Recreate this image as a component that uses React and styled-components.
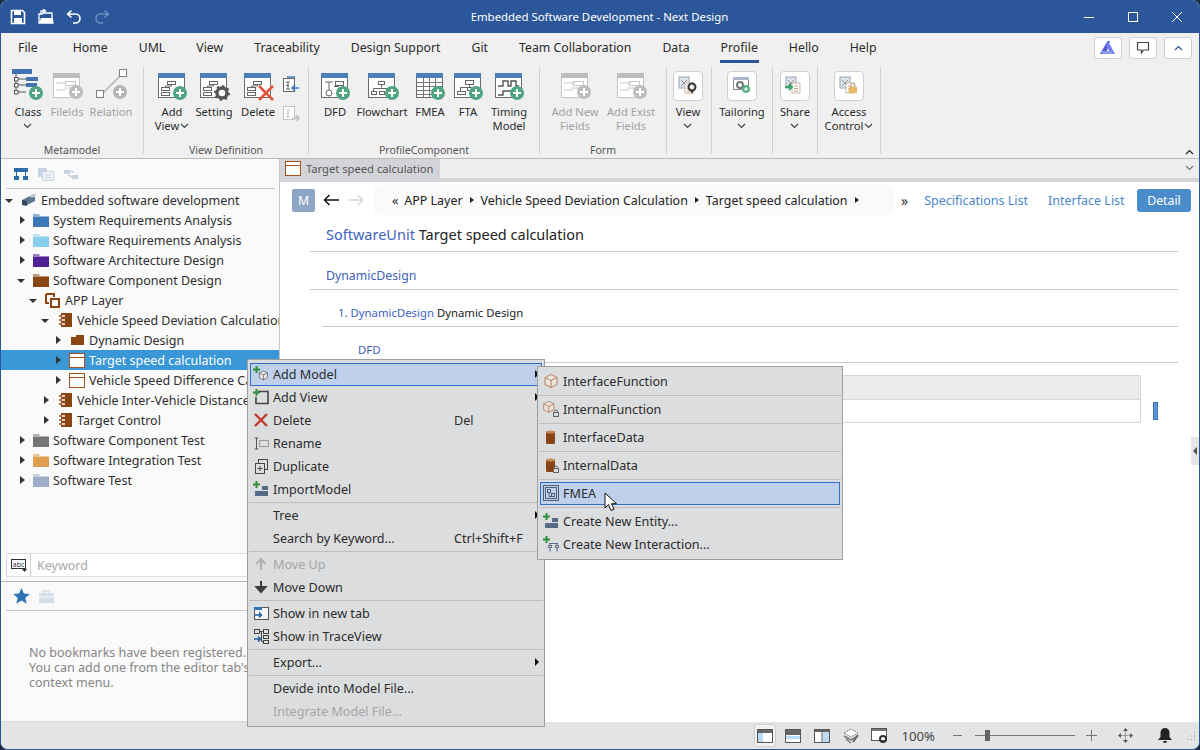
import React from "react";
import styled, { createGlobalStyle } from "styled-components";

const FONT = `"Noto Sans", "Open Sans", sans-serif`;

const GlobalStyle = createGlobalStyle`
  html, body {
    margin: 0;
    padding: 0;
    width: 1200px;
    height: 750px;
    overflow: hidden;
    background: #1d2a40;
    font-family: ${FONT};
  }
`;

const Window = styled.div`
  position: relative;
  box-sizing: border-box;
  width: 1200px;
  height: 750px;
  display: flex;
  flex-direction: column;
  overflow: hidden;
  background: #f0f0f0;
  border: 1px solid #2b579a;
  border-top: 0;
  border-radius: 8px;
  color: #222;
  font-size: 12.3px;
`;

/* title bar */
const TitleBar = styled.div`
  position: relative;
  height: 33px;
  flex: none;
  display: flex;
  align-items: center;
  background: #2b579a;
  color: #fff;
  padding-left: 3px;
`;

const QuickButton = styled.span`
  width: 28px;
  height: 20px;
  display: flex;
  align-items: center;
  justify-content: center;
`;

const WindowTitle = styled.div`
  flex: 1;
  text-align: center;
  padding-left: 16px;
  font-size: 11.4px;
`;

const WindowControl = styled.span`
  width: 44px;
  height: 20px;
  display: flex;
  align-items: center;
  justify-content: center;
`;

/* menu */
const MenuBar = styled.div`
  height: 30px;
  flex: none;
  display: flex;
  align-items: center;
  padding: 0 7px 0 17px;
  gap: 31px;
`;

const MenuTab = styled.span`
  position: relative;
  line-height: 30px;
  margin-left: ${(p) => p.$shift || 0}px;
  color: #2a2a2a;
  &::after {
    content: "";
    display: ${(p) => (p.$active ? "block" : "none")};
    position: absolute;
    left: -1px;
    right: -1px;
    bottom: 0;
    height: 3px;
    background: #2b579a;
  }
`;

const MenuTools = styled.div`
  margin-left: auto;
  display: flex;
  gap: 7px;
`;

const MenuTool = styled.span`
  box-sizing: border-box;
  width: 28px;
  height: 22px;
  display: flex;
  align-items: center;
  justify-content: center;
  background: #fff;
  border: 1px solid #cfcfcf;
  border-radius: 3px;
`;

/* ribbon */
const Ribbon = styled.div`
  position: relative;
  box-sizing: border-box;
  height: 96px;
  flex: none;
  display: flex;
  padding-top: 4px;
  border-bottom: 1px solid #b9b9b9;
`;

const Group = styled.div`
  box-sizing: border-box;
  width: ${(p) => p.$w}px;
  height: 87px;
  flex: none;
  display: flex;
  flex-direction: column;
  border-right: 1px solid #d2d2d2;
`;

const GroupItems = styled.div`
  flex: 1;
  display: flex;
  padding-left: ${(p) => p.$pad || 0}px;
`;

const GroupTitle = styled.div`
  height: 14px;
  line-height: 14px;
  margin-bottom: -3px;
  text-align: center;
  font-size: 10.5px;
  color: #555;
`;

const RibbonItem = styled.div`
  width: ${(p) => p.$w}px;
  flex: none;
  display: flex;
  flex-direction: column;
  align-items: center;
  padding-top: 1px;
  color: ${(p) => (p.$off ? "#a2a2a2" : "#2a2a2a")};
`;

const IconSlot = styled.div`
  height: 34px;
  display: flex;
  align-items: center;
  justify-content: center;
`;

const RibbonLabel = styled.div`
  margin-top: 3px;
  display: flex;
  flex-direction: column;
  align-items: center;
  line-height: 14px;
  font-size: 11.2px;
  white-space: nowrap;
`;

const LabelLine = styled.span`
  display: flex;
  align-items: center;
  gap: 1px;
  height: 14px;
`;

const SquareButton = styled.span`
  box-sizing: border-box;
  width: 30px;
  height: 30px;
  margin-top: 2px;
  display: flex;
  align-items: center;
  justify-content: center;
  background: #fff;
  border: 1px solid #cfcfcf;
  border-radius: 4px;
`;

const SmallColumn = styled.div`
  width: 22px;
  display: flex;
  flex-direction: column;
  align-items: center;
  gap: 10px;
  padding-top: 9px;
`;

const CollapseRibbon = styled.span`
  position: absolute;
  right: 5px;
  bottom: 3px;
  line-height: 0;
`;

/* body */
const Body = styled.div`
  flex: 1;
  min-height: 0;
  display: flex;
`;

const Sidebar = styled.aside`
  box-sizing: border-box;
  width: 279px;
  flex: none;
  display: flex;
  flex-direction: column;
  overflow: hidden;
  background: #fafafa;
  border-right: 1px solid #c4c4c4;
  border-bottom: 1px solid #d8d8d8;
  font-size: 12.5px;
`;

const PaneTools = styled.div`
  box-sizing: border-box;
  height: ${(p) => p.$h}px;
  flex: none;
  margin: 0 4px 0 5px;
  display: flex;
  align-items: center;
  gap: ${(p) => p.$gap || 9}px;
  padding-left: 7px;
  border-bottom: 1px solid #c8c8c8;
`;

const Tree = styled.div`
  height: 363px;
  flex: none;
  padding-top: 1px;
`;

const TreeRow = styled.div`
  height: 20px;
  display: flex;
  align-items: center;
  white-space: nowrap;
  padding-left: ${(p) => p.$depth * 12}px;
  background: ${(p) => (p.$selected ? "#3a97d8" : "transparent")};
  color: ${(p) => (p.$selected ? "#fff" : "#2f2f2f")};
`;

const Twist = styled.span`
  width: 15px;
  flex: none;
  display: flex;
  justify-content: center;
  &::before {
    content: "";
    display: ${(p) => (p.$state ? "block" : "none")};
    border-style: solid;
    border-color: transparent;
    ${(p) =>
      p.$state === "open"
        ? "border-width: 4px 4px 0 4px; border-top-color: #333; margin-top: 2px;"
        : "border-width: 4px 0 4px 5px; border-left-color: #333; margin-left: 4px;"}
  }
`;

const TreeIcon = styled.span`
  width: 16px;
  margin: 0 4px 0 5px;
  flex: none;
  display: flex;
  justify-content: center;
`;

const SearchBox = styled.div`
  box-sizing: border-box;
  height: 24px;
  flex: none;
  margin: 0 4px 4px 5px;
  display: flex;
  align-items: center;
  background: #fff;
  border: 1px solid #dcdcdc;
`;

const SearchIcon = styled.span`
  width: 23px;
  height: 22px;
  display: flex;
  align-items: center;
  justify-content: center;
  border-right: 1px solid #cfcfcf;
`;

const SearchHint = styled.span`
  padding-left: 6px;
  color: #a8a8a8;
`;

const PaneDivider = styled.div`
  height: 1px;
  flex: none;
  background: #b4b4b4;
`;

const EmptyNote = styled.p`
  margin: 34px 0 0 28px;
  width: 300px;
  line-height: 15px;
  color: #858585;
`;

const Main = styled.main`
  flex: 1;
  min-width: 0;
  display: flex;
  flex-direction: column;
  background: #fff;
  position: relative;
`;

const TabStrip = styled.div`
  height: 23px;
  flex: none;
  display: flex;
  background: #eeeeee;
  border-bottom: 4px solid #d3d4d8;
  box-sizing: border-box;
`;

const EditorTab = styled.div`
  width: 160px;
  flex: none;
  display: flex;
  align-items: center;
  gap: 5px;
  padding-left: 5px;
  box-sizing: border-box;
  background: #d3d4d8;
  color: #555;
  font-size: 11.2px;
  white-space: nowrap;
  svg {
    flex: none;
  }
`;

const TabMenu = styled.span`
  margin-left: auto;
  padding: 6px 5px 0 0;
  line-height: 0;
`;

const NavRow = styled.div`
  box-sizing: border-box;
  height: 36px;
  flex: none;
  display: flex;
  align-items: center;
  padding: 0 8px 0 12px;
`;

const ModeBadge = styled.span`
  width: 23px;
  height: 23px;
  display: flex;
  align-items: center;
  justify-content: center;
  background: #8fa5c6;
  color: #fff;
  border-radius: 2px;
`;

const NavArrows = styled.span`
  display: flex;
  gap: 9px;
  margin-left: 8px;
`;

const Breadcrumb = styled.div`
  box-sizing: border-box;
  width: 520px;
  height: 30px;
  margin-left: 10px;
  padding-left: 18px;
  display: flex;
  align-items: center;
  gap: 6px;
  background: #fafafa;
  border-radius: 5px;
  color: #222;
  font-size: 12.45px;
`;

const Caret = styled.span`
  margin: 0 1px;
  border-style: solid;
  border-color: transparent;
  border-width: 3.5px 0 3.5px 4px;
  border-left-color: #222;
`;

const NavMore = styled.span`
  margin-left: 7px;
  color: #333;
  font-size: 14px;
`;

const NavLink = styled.span`
  margin-left: ${(p) => p.$ml}px;
  color: #4a87c7;
  font-size: 12.5px;
`;

const DetailButton = styled.span`
  width: 54px;
  height: 23px;
  margin-left: auto;
  display: flex;
  align-items: center;
  justify-content: center;
  background: #4a8cca;
  color: #fff;
  border-radius: 3px;
`;

const Heading = styled.div`
  margin: 0 21px 0 ${(p) => p.$indent}px;
  padding: ${(p) => p.$top}px 0 ${(p) => p.$bottom}px ${(p) => p.$pad}px;
  line-height: 18px;
  font-size: ${(p) => p.$size}px;
  border-bottom: 1px solid #c9c9c9;
`;

const Kind = styled.span`
  color: #3f5fbd;
`;

const ModelTable = styled.div`
  margin: 12px 0 0 78px;
  display: flex;
  align-items: flex-start;
  gap: 12px;
`;

const TableBody = styled.div`
  width: 783px;
  display: flex;
  flex-direction: column;
`;

const TableHead = styled.div`
  height: 23px;
  background: #ebebeb;
  border: 1px solid #d8d8d8;
  border-bottom: 0;
`;

const TableCell = styled.div`
  height: 22px;
  background: #fff;
  border: 1px solid #d8d8d8;
`;

const ResizeMark = styled.span`
  box-sizing: border-box;
  width: 5px;
  height: 18px;
  margin-top: 27px;
  background: #5a97dc;
  border: 1px solid #3f6fae;
`;

const SideHandle = styled.span`
  position: absolute;
  right: 0;
  top: 278px;
  box-sizing: border-box;
  width: 8px;
  height: 28px;
  display: flex;
  align-items: center;
  justify-content: center;
  background: #e6e6e6;
  &::before {
    content: "";
    border-style: solid;
    border-color: transparent;
    border-width: 4px 4px 4px 0;
    border-right-color: #555;
  }
`;

/* status bar */
const StatusBar = styled.footer`
  height: 27px;
  flex: none;
  display: flex;
  align-items: center;
  justify-content: flex-end;
  padding-right: 3px;
  background: #e3e4e6;
  color: #444;
`;

const StatusItem = styled.span`
  margin-left: ${(p) => p.$ml}px;
  display: flex;
  align-items: center;
  justify-content: center;
  font-size: ${(p) => p.$size || 12.3}px;
  ${(p) =>
    p.$active &&
    "width: 22px; height: 23px; box-sizing: border-box; background: #f2f2f2; border: 1px solid #cfcfcf; border-radius: 3px;"}
`;

const ZoomSlider = styled.span`
  position: relative;
  width: 100px;
  height: 1px;
  margin-left: 13px;
  background: #777;
  &::after {
    content: "";
    position: absolute;
    left: 10px;
    top: -5px;
    width: 5px;
    height: 11px;
    background: #666;
  }
`;

/* context menus */
const Popup = styled.div`
  position: absolute;
  left: ${(p) => p.$x}px;
  top: ${(p) => p.$y}px;
  width: ${(p) => p.$w}px;
  box-sizing: border-box;
  padding: 3px 2px;
  background: #dcddde;
  border: 1px solid #9e9e9e;
  color: #2b2b2b;
  font-size: 12.6px;
`;

const PopupItem = styled.div`
  position: relative;
  box-sizing: border-box;
  height: 23px;
  display: flex;
  align-items: center;
  padding-left: 23px;
  white-space: nowrap;
  color: ${(p) => (p.$off ? "#a5a5a5" : "inherit")};
  background: ${(p) => (p.$hot ? "#bed0eb" : "transparent")};
  outline: ${(p) => (p.$hot ? "1px solid #2f6fc9" : "0")};
  outline-offset: -1px;
`;

const PopupIcon = styled.span`
  position: absolute;
  left: 3px;
  top: 3px;
  width: 17px;
  height: 17px;
  line-height: 0;
`;

const Shortcut = styled.span`
  position: absolute;
  left: 204px;
  top: 3px;
`;

const SubArrow = styled.span`
  position: absolute;
  right: 3px;
  top: 7px;
  border-style: solid;
  border-color: transparent;
  border-width: 4px 0 4px 4px;
  border-left-color: #111;
`;

const PopupRule = styled.div`
  height: 1px;
  margin: ${(p) => p.$gap}px -1px ${(p) => p.$gapEnd}px;
  background: #bdbdbd;
`;

const PointerMark = styled.svg`
  position: absolute;
  left: 603px;
  top: 492px;
`;

/* drawings */
const Plus = ({ cx = 26, cy = 25, r = 7, color = "#4fa582" }) => (
  <g>
    <circle cx={cx} cy={cy} r={r} fill={color} />
    <path d={`M${cx - 4} ${cy}h8M${cx} ${cy - 4}v8`} stroke="#fff" strokeWidth="2" />
  </g>
);

const Frame = ({ head = "#4a7fb8", line = "#6c6c6c", children }) => (
  <g>
    <rect x="4.5" y="5.5" width="26" height="24" fill="#fff" stroke={line} />
    <rect x="4" y="5" width="27" height="5" fill={head} />
    {children}
  </g>
);

const Flow = ({ stroke = "#666" }) => (
  <g fill="none" stroke={stroke}>
    <rect x="13.5" y="13.5" width="8" height="3" />
    <rect x="7.5" y="19.5" width="8" height="3" />
    <rect x="7.5" y="24.5" width="8" height="3" />
    <path d="M17.5 16.5v1.5h-6v1.5" />
  </g>
);

const FieldLines = () => (
  <g fill="none" stroke="#c6c6c6">
    <path d="M7 15h9M7 22h9" />
    <rect x="16.5" y="13.5" width="10" height="4" />
    <path d="M14 20h11" />
  </g>
);

const Cog = ({ cx, cy }) => (
  <g>
    <circle cx={cx} cy={cy} r="5" fill="none" stroke="#555" strokeWidth="3.4" />
    <circle cx={cx} cy={cy} r="7" fill="none" stroke="#555" strokeWidth="2" strokeDasharray="2.2 3.3" />
  </g>
);

const glyphs = {
  cls: (
    <g>
      <rect x="2" y="1" width="20" height="5" fill="#3f74b0" />
      <path d="M6 6v18M8 11h8M8 17h8M8 24h8" stroke="#555" fill="none" />
      <g fill="#fff" stroke="#555">
        <rect x="4.5" y="9.5" width="3.5" height="3.5" />
        <rect x="4.5" y="15.5" width="3.5" height="3.5" />
        <rect x="4.5" y="22.5" width="3.5" height="3.5" />
      </g>
      <rect x="16" y="9" width="12" height="4" fill="#3f74b0" />
      <rect x="16" y="15" width="11" height="4" fill="#3f74b0" />
      <Plus cx="26" cy="25" />
    </g>
  ),
  fields: (
    <g>
      <Frame head="#bdbdbd" line="#c4c4c4">
        <FieldLines />
      </Frame>
      <Plus cx="27" cy="24" color="#bdbdbd" />
    </g>
  ),
  relation: (
    <g>
      <path d="M10 25L28 7" stroke="#b2b2b2" strokeWidth="1.5" />
      <rect x="3.5" y="22.5" width="7" height="7" fill="#fff" stroke="#808080" />
      <rect x="26.5" y="1.5" width="7" height="7" fill="#fff" stroke="#808080" />
      <Plus cx="27" cy="24" color="#b5b5b5" />
    </g>
  ),
  add: (
    <g>
      <Frame>
        <Flow />
      </Frame>
      <Plus />
    </g>
  ),
  setting: (
    <g>
      <Frame>
        <Flow />
      </Frame>
      <Cog cx="26" cy="25" />
    </g>
  ),
  del: (
    <g>
      <Frame>
        <Flow />
      </Frame>
      <path d="M19 18l14 14M33 18L19 32" stroke="#e0553a" strokeWidth="2.6" />
    </g>
  ),
  dfd: (
    <g>
      <Frame>
        <g fill="none" stroke="#666">
          <path d="M8 14h8M12 14v8M17 18.5h5" />
          <rect x="18.5" y="13.5" width="8" height="4" />
          <circle cx="12" cy="25" r="3" />
        </g>
      </Frame>
      <Plus />
    </g>
  ),
  flow: (
    <g>
      <Frame>
        <g fill="none" stroke="#666">
          <rect x="14.5" y="13.5" width="6" height="3" />
          <path d="M17.5 16.5v3M9.5 23v-2.5h16V23" />
          <rect x="7.5" y="23.5" width="5" height="3" />
          <rect x="15.5" y="23.5" width="5" height="3" />
        </g>
      </Frame>
      <Plus cx="28" cy="25" />
    </g>
  ),
  fmea: (
    <g>
      <Frame>
        <path d="M5 14.5h25M5 18.5h25M5 22.5h25M5 26.5h18M11.5 10v19M17.5 10v19M23.5 10v14" stroke="#777" fill="none" />
      </Frame>
      <Plus />
    </g>
  ),
  fta: (
    <g>
      <Frame>
        <g fill="none" stroke="#666">
          <rect x="15.5" y="12.5" width="8" height="4" />
          <path d="M19.5 16.5v3M10.5 23v-3.5h9" />
          <rect x="7.5" y="23.5" width="8" height="3" />
          <rect x="17.5" y="19.5" width="4" height="3" />
        </g>
      </Frame>
      <Plus />
    </g>
  ),
  timing: (
    <g>
      <Frame>
        <path d="M7 18h5v-5h5v5h3v-5h5v5h3M7 27h5v-4h12" stroke="#555" strokeWidth="1.4" fill="none" />
      </Frame>
      <Plus />
    </g>
  ),
};

const RibbonGlyph = ({ name }) => (
  <svg width="36" height="34" viewBox="0 0 36 34">
    {glyphs[name]}
  </svg>
);

const MiniDoc = ({ children }) => (
  <svg width="22" height="22" viewBox="0 0 22 22">
    <rect x="2" y="2" width="10" height="11" fill="#dfe4ee" stroke="#97a3b5" />
    <path d="M4 5l6 6M4 11l6-6" stroke="#8e8e8e" />
    <rect x="8" y="8" width="8" height="10" fill="#fff" stroke="#c8b8a8" />
    <path d="M10 11h4M10 13.5h4M10 16h4" stroke="#d0a080" />
    {children}
  </svg>
);

const miniIcons = {
  view: (
    <MiniDoc>
      <circle cx="15" cy="12" r="3.5" fill="none" stroke="#333" strokeWidth="2" />
      <path d="M13 15l2 4 2-4" fill="#333" />
    </MiniDoc>
  ),
  tailoring: (
    <svg width="22" height="22" viewBox="0 0 22 22">
      <rect x="2.5" y="2.5" width="15" height="12" fill="#fff" stroke="#888" />
      <rect x="2" y="2" width="16" height="3" fill="#a9b7c9" />
      <circle cx="9" cy="10" r="3" fill="none" stroke="#777" strokeWidth="2" />
      <circle cx="15" cy="14" r="4" fill="#57b184" />
      <path d="M13 14h4M15 12v4" stroke="#fff" />
    </svg>
  ),
  share: (
    <MiniDoc>
      <path d="M1 12h7M5 9l3 3-3 3" stroke="#3aa66f" strokeWidth="2" fill="none" />
    </MiniDoc>
  ),
  access: (
    <MiniDoc>
      <rect x="11" y="12" width="8" height="6" fill="#e9b768" />
      <path d="M13 12v-2a2 2 0 0 1 4 0v2" fill="none" stroke="#c9a570" />
    </MiniDoc>
  ),
};

const TinyChevron = ({ up, color = "#444", size = 9 }) => (
  <svg width={size} height="6" viewBox="0 0 9 6">
    <path d={up ? "M1 5l3.5-3.5L8 5" : "M1 1l3.5 3.5L8 1"} fill="none" stroke={color} strokeWidth="1.2" />
  </svg>
);

const SwapIcon = ({ dim }) => (
  <svg width="18" height="18" viewBox="0 0 18 18">
    <rect x="1.5" y="2.5" width="11" height="13" fill="#fff" stroke={dim ? "#c4c4c4" : "#666"} />
    <path d="M4 6h4M4 9.5h3M4 13h4M6 6v7" stroke={dim ? "#c8c8c8" : "#666"} fill="none" />
    <path d={dim ? "M10 14h7M14 11l3 3-3 3" : "M17 12h-7M13 9l-3 3 3 3"} stroke={dim ? "#c4c4c4" : "#3f7fc0"} strokeWidth="1.6" fill="none" />
    {!dim && <path d="M5 1h8" stroke="#3f7fc0" strokeWidth="1.5" />}
  </svg>
);

const FolderIcon = ({ color }) => (
  <svg width="16" height="14" viewBox="0 0 16 14">
    <path d="M0 1h6l1 2h9v2H0z" fill={color} opacity="0.55" />
    <rect x="0" y="4" width="16" height="10" fill={color} />
  </svg>
);

const BROWN = "#8b4513";

const treeIcons = {
  root: (
    <svg width="16" height="14" viewBox="0 0 16 14">
      <path d="M1 7l8-4 5 1v4l-8 4-5-1z" fill="#5f7890" />
      <path d="M8 3l5-2 3 1-5 3z" fill="#b8c4d2" />
      <path d="M1 7l5 1v5l-5-1z" fill="#33475c" />
    </svg>
  ),
  package: (
    <svg width="16" height="15" viewBox="0 0 16 15">
      <path d="M1 1h8v3M1 1v9h3" fill="none" stroke={BROWN} strokeWidth="2" />
      <rect x="6" y="6" width="8" height="8" fill="none" stroke={BROWN} strokeWidth="2" />
    </svg>
  ),
  component: (
    <svg width="14" height="14" viewBox="0 0 14 14">
      <rect x="3" y="0" width="11" height="14" fill={BROWN} />
      <path d="M1 3h6M1 7h6M1 11h6" stroke="#fff" strokeWidth="1.4" />
      <path d="M1 3h3M1 7h3M1 11h3" stroke={BROWN} strokeWidth="1.4" />
    </svg>
  ),
  pack: (
    <svg width="13" height="10" viewBox="0 0 13 10">
      <path d="M0 2h5V0h8v10H0z" fill={BROWN} />
    </svg>
  ),
  unit: (
    <svg width="16" height="15" viewBox="0 0 16 15">
      <rect x="0.5" y="0.5" width="15" height="14" fill="#fff" stroke="#a3521f" />
      <path d="M0 4.5h16" stroke="#a3521f" />
    </svg>
  ),
};

const GreenCross = () => <path d="M3.5 0v7M0 3.5h7" stroke="#2f8f3c" strokeWidth="2" />;

const Blocks = () => (
  <g fill="#566b85">
    <rect x="9" y="5" width="6" height="4" />
    <rect x="2" y="10" width="13" height="5" />
  </g>
);

const CubeShape = ({ color = "#b97f5a", dx = 0, dy = 0 }) => (
  <g transform={`translate(${dx} ${dy})`} fill="#e9e4df" stroke={color}>
    <path d="M2 4.5L8 1.5l6 3v7l-6 3-6-3z" />
    <path d="M2 4.5l6 3 6-3M8 7.5v7" fill="none" />
  </g>
);

const Cylinder = ({ w = 8 }) => (
  <g>
    <rect x={3} y={2} width={w} height={13} rx="1.5" fill={BROWN} />
    <ellipse cx={3 + w / 2} cy={3} rx={w / 2} ry="1.5" fill="#c48a58" />
  </g>
);

const LockMark = () => (
  <g>
    <rect x="10.5" y="11.5" width="5" height="4" fill="#dcddde" stroke="#666" />
    <path d="M11.5 11.5v-1a1.5 1.5 0 0 1 3 0v1" fill="none" stroke="#666" />
  </g>
);

const popupIcons = {
  addModel: (
    <g>
      <GreenCross />
      <g transform="translate(5 4) scale(0.68)">
        <CubeShape color="#555" />
      </g>
    </g>
  ),
  addView: (
    <g>
      <path d="M5 2.5h10v12H3V8" fill="none" stroke="#444" strokeWidth="1.6" />
      <GreenCross />
    </g>
  ),
  del: <path d="M2 2l12 12M14 2L2 14" stroke="#c23a2b" strokeWidth="2.4" />,
  rename: (
    <g fill="none" stroke="#555">
      <path d="M1.5 3h4M1.5 14h4M3.5 3v11" />
      <rect x="6.5" y="5.5" width="9" height="6" strokeDasharray="1 1" />
    </g>
  ),
  duplicate: (
    <g fill="#dcddde" stroke="#444">
      <rect x="5.5" y="1.5" width="9" height="10" />
      <rect x="2.5" y="5.5" width="9" height="10" />
      <path d="M7 8v5M4.5 10.5h5" fill="none" />
    </g>
  ),
  importModel: (
    <g>
      <GreenCross />
      <Blocks />
    </g>
  ),
  up: <path d="M8 3v11M3.5 8L8 3l4.5 5" stroke="#b0b0b0" strokeWidth="2" fill="none" />,
  down: <path d="M8 2v9M3.5 8L8 13l4.5-5z" stroke="#3d3d3d" fill="#3d3d3d" strokeWidth="2" />,
  newTab: (
    <g>
      <rect x="1.5" y="2.5" width="14" height="12" fill="#f5f5f5" stroke="#555" />
      <rect x="1" y="2" width="8" height="3" fill="#2f74b5" />
      <path d="M2 10h6M6 7.5L8.5 10 6 12.5" stroke="#1e5fa5" strokeWidth="1.5" fill="none" />
    </g>
  ),
  traceView: (
    <g fill="none" stroke="#444">
      <rect x="1.5" y="1.5" width="5" height="4" />
      <rect x="10.5" y="1.5" width="5" height="4" />
      <rect x="10.5" y="7.5" width="5" height="3" />
      <rect x="10.5" y="12.5" width="5" height="3" />
      <path d="M6.5 3.5h4M8.5 3.5v10h2" />
      <path d="M1 11h6M5 8.5L7.5 11 5 13.5" stroke="#1e5fa5" strokeWidth="1.5" />
    </g>
  ),
  cube: <CubeShape />,
  cubeLock: (
    <g>
      <g transform="translate(-1 -1) scale(0.85)">
        <CubeShape />
      </g>
      <LockMark />
    </g>
  ),
  data: <Cylinder w={9} />,
  dataLock: (
    <g>
      <Cylinder w={9} />
      <LockMark />
    </g>
  ),
  frame: (
    <g fill="none" stroke="#4d5f78">
      <rect x="0.5" y="0.5" width="15" height="15" />
      <rect x="2.5" y="2.5" width="11" height="11" />
      <rect x="4.5" y="4.5" width="3" height="3" />
      <rect x="8.5" y="8.5" width="3" height="3" />
      <path d="M6 8v3.5h2.5" />
    </g>
  ),
  entity: (
    <g>
      <GreenCross />
      <Blocks />
    </g>
  ),
  interaction: (
    <g>
      <GreenCross />
      <g fill="none" stroke="#566b85">
        <path d="M6 7.5h9M7 7.5v2M14 7.5v2M5.5 9.5h3v2h-3zM12.5 9.5h3v2h-3z" />
        <path d="M7 11.5v4M14 11.5v4" />
      </g>
    </g>
  ),
};

const PopupGlyph = ({ name }) => (
  <svg width="17" height="17" viewBox="0 0 17 17">
    {popupIcons[name]}
  </svg>
);

const ribbonGroups = [
  {
    title: "Metamodel",
    w: 143,
    pad: 7,
    items: [
      { w: 40, icon: "cls", lines: ["Class"], chevron: "below" },
      { w: 38, icon: "fields", lines: ["Filelds"], off: true },
      { w: 50, icon: "relation", lines: ["Relation"], off: true },
    ],
  },
  {
    title: "View Definition",
    w: 165,
    pad: 8,
    small: true,
    items: [
      { w: 40, icon: "add", lines: ["Add", "View"], chevron: "inline" },
      { w: 44, icon: "setting", lines: ["Setting"] },
      { w: 44, icon: "del", lines: ["Delete"] },
    ],
  },
  {
    title: "ProfileComponent",
    w: 231,
    pad: 8,
    items: [
      { w: 36, icon: "dfd", lines: ["DFD"] },
      { w: 58, icon: "flow", lines: ["Flowchart"] },
      { w: 38, icon: "fmea", lines: ["FMEA"] },
      { w: 38, icon: "fta", lines: ["FTA"] },
      { w: 44, icon: "timing", lines: ["Timing", "Model"] },
    ],
  },
  {
    title: "Form",
    w: 127,
    pad: 5,
    items: [
      { w: 60, icon: "fields", lines: ["Add New", "Fields"], off: true },
      { w: 52, icon: "fields", lines: ["Add Exist", "Fields"], off: true },
    ],
  },
  { w: 45, pad: 0, items: [{ w: 42, mini: "view", lines: ["View"], chevron: "below" }] },
  { w: 61, pad: 0, items: [{ w: 60, mini: "tailoring", lines: ["Tailoring"], chevron: "below" }] },
  { w: 45, pad: 0, items: [{ w: 44, mini: "share", lines: ["Share"], chevron: "below" }] },
  { w: 63, pad: 0, items: [{ w: 62, mini: "access", lines: ["Access", "Control"], chevron: "inline" }] },
];

const treeRows = [
  { depth: 0, twist: "open", label: "Embedded software development", icon: "root" },
  { depth: 1, twist: "closed", label: "System Requirements Analysis", folder: "#3b78b5" },
  { depth: 1, twist: "closed", label: "Software Requirements Analysis", folder: "#87cfeb" },
  { depth: 1, twist: "closed", label: "Software Architecture Design", folder: "#4f1f96" },
  { depth: 1, twist: "open", label: "Software Component Design", folder: BROWN },
  { depth: 2, twist: "open", label: "APP Layer", icon: "package" },
  { depth: 3, twist: "open", label: "Vehicle Speed Deviation Calculation", icon: "component" },
  { depth: 4, twist: "closed", label: "Dynamic Design", icon: "pack" },
  { depth: 4, twist: "closed", label: "Target speed calculation", icon: "unit", selected: true },
  { depth: 4, twist: "closed", label: "Vehicle Speed Difference Calculation", icon: "unit" },
  { depth: 3, twist: "closed", label: "Vehicle Inter-Vehicle Distance Calculation", icon: "component" },
  { depth: 3, twist: "closed", label: "Target Control", icon: "component" },
  { depth: 1, twist: "closed", label: "Software Component Test", folder: "#767676" },
  { depth: 1, twist: "closed", label: "Software Integration Test", folder: "#dea050" },
  { depth: 1, twist: "closed", label: "Software Test", folder: "#9fadc9" },
];

const mainMenu = [
  { label: "Add Model", icon: "addModel", hot: true, sub: true },
  { label: "Add View", icon: "addView", sub: true },
  { label: "Delete", icon: "del", key: "Del" },
  { label: "Rename", icon: "rename" },
  { label: "Duplicate", icon: "duplicate" },
  { label: "ImportModel", icon: "importModel" },
  { rule: true },
  { label: "Tree", sub: true },
  { label: "Search by Keyword...", key: "Ctrl+Shift+F" },
  { rule: true },
  { label: "Move Up", icon: "up", off: true },
  { label: "Move Down", icon: "down" },
  { rule: true },
  { label: "Show in new tab", icon: "newTab" },
  { label: "Show in TraceView", icon: "traceView" },
  { rule: true },
  { label: "Export...", sub: true },
  { rule: true },
  { label: "Devide into Model File..." },
  { label: "Integrate Model File...", off: true },
];

const subMenu = [
  { label: "InterfaceFunction", icon: "cube" },
  { rule: true },
  { label: "InternalFunction", icon: "cubeLock" },
  { rule: true },
  { label: "InterfaceData", icon: "data" },
  { rule: true },
  { label: "InternalData", icon: "dataLock" },
  { rule: true },
  { label: "FMEA", icon: "frame", hot: true },
  { rule: true },
  { label: "Create New Entity...", icon: "entity" },
  { label: "Create New Interaction...", icon: "interaction" },
];

const tabs = ["File", "Home", "UML", "View", "Traceability", "Design Support", "Git", "Team Collaboration", "Data", "Profile", "Hello", "Help"];

const PopupMenu = ({ entries, x, y, w, gap, gapEnd }) => (
  <Popup $x={x} $y={y} $w={w}>
    {entries.map((entry, i) =>
      entry.rule ? (
        <PopupRule key={i} $gap={gap} $gapEnd={gapEnd} />
      ) : (
        <PopupItem key={entry.label} $hot={entry.hot} $off={entry.off}>
          {entry.icon && (
            <PopupIcon>
              <PopupGlyph name={entry.icon} />
            </PopupIcon>
          )}
          {entry.label}
          {entry.key && <Shortcut>{entry.key}</Shortcut>}
          {entry.sub && <SubArrow />}
        </PopupItem>
      ),
    )}
  </Popup>
);

const RibbonEntry = ({ item }) => (
  <RibbonItem $w={item.w} $off={item.off}>
    <IconSlot>
      {item.mini ? <SquareButton>{miniIcons[item.mini]}</SquareButton> : <RibbonGlyph name={item.icon} />}
    </IconSlot>
    <RibbonLabel>
      {item.lines.map((line, i) => (
        <LabelLine key={line}>
          {line}
          {item.chevron === "inline" && i === item.lines.length - 1 && <TinyChevron />}
        </LabelLine>
      ))}
      {item.chevron === "below" && (
        <LabelLine>
          <TinyChevron />
        </LabelLine>
      )}
    </RibbonLabel>
  </RibbonItem>
);

export default function App() {
  return (
    <Window>
      <GlobalStyle />
      <TitleBar>
        <QuickButton>
          <svg width="16" height="16" viewBox="0 0 16 16">
            <path d="M1.5 1.5h11l2 2v11h-13z" fill="none" stroke="#fff" strokeWidth="1.6" />
            <path d="M4 2h7v4H4zM4 9h8v5H4z" fill="#fff" />
          </svg>
        </QuickButton>
        <QuickButton>
          <svg width="16" height="16" viewBox="0 0 16 16">
            <path d="M1 5h3l1-1h9v4l1 6H1z" fill="none" stroke="#fff" strokeWidth="1.3" />
            <path d="M1 14l2-5h12v5z" fill="#fff" />
            <path d="M3 5V2h4M5 0l2.5 2L5 4" fill="none" stroke="#fff" strokeWidth="1.3" />
          </svg>
        </QuickButton>
        <QuickButton>
          <svg width="16" height="16" viewBox="0 0 16 16">
            <path d="M5.5 1.5L1.5 5l4 3.5M2 5h7.5a4.5 4.5 0 0 1 0 9H7" fill="none" stroke="#fff" strokeWidth="1.6" />
          </svg>
        </QuickButton>
        <QuickButton>
          <svg width="16" height="16" viewBox="0 0 16 16">
            <path d="M10.5 1.5l4 3.5-4 3.5M14 5H6.5a4.5 4.5 0 0 0 0 9H9" fill="none" stroke="#6d8fc0" strokeWidth="1.6" />
          </svg>
        </QuickButton>
        <WindowTitle>Embedded Software Development - Next Design</WindowTitle>
        <WindowControl>
          <svg width="10" height="10" viewBox="0 0 10 10">
            <path d="M0 5.5h10" stroke="#fff" />
          </svg>
        </WindowControl>
        <WindowControl>
          <svg width="10" height="10" viewBox="0 0 10 10">
            <rect x="0.5" y="0.5" width="9" height="9" fill="none" stroke="#fff" />
          </svg>
        </WindowControl>
        <WindowControl>
          <svg width="10" height="10" viewBox="0 0 10 10">
            <path d="M0 0l10 10M10 0L0 10" stroke="#fff" />
          </svg>
        </WindowControl>
      </TitleBar>

      <MenuBar>
        {tabs.map((tab) => (
          <MenuTab key={tab} $active={tab === "Profile"} $shift={tab === "Home" ? 4 : 0}>
            {tab}
          </MenuTab>
        ))}
        <MenuTools>
          <MenuTool>
            <svg width="18" height="16" viewBox="0 0 18 16">
              <path d="M1 14L8.5 1h2.5L7 14z" fill="#5b5bd6" />
              <path d="M9 1l7 13h-4L7 5z" fill="#6f7ff0" />
              <path d="M3 11h9l2 3H3z" fill="#8a9df5" />
            </svg>
          </MenuTool>
          <MenuTool>
            <svg width="14" height="14" viewBox="0 0 14 14">
              <path d="M1.5 1.5h11v7.5h-5l-2 3v-3h-4z" fill="none" stroke="#444" strokeWidth="1.2" />
            </svg>
          </MenuTool>
          <MenuTool>
            <TinyChevron up color="#2b579a" />
          </MenuTool>
        </MenuTools>
      </MenuBar>

      <Ribbon>
        {ribbonGroups.map((group, g) => (
          <Group key={g} $w={group.w}>
            <GroupItems $pad={group.pad}>
              {group.items.map((item, i) => (
                <RibbonEntry key={i} item={item} />
              ))}
              {group.small && (
                <SmallColumn>
                  <SwapIcon />
                  <SwapIcon dim />
                </SmallColumn>
              )}
            </GroupItems>
            <GroupTitle>{group.title}</GroupTitle>
          </Group>
        ))}
        <CollapseRibbon>
          <TinyChevron up color="#222" />
        </CollapseRibbon>
      </Ribbon>

      <Body>
        <Sidebar>
          <PaneTools $h={30} $gap={9}>
            <svg width="16" height="14" viewBox="0 0 16 14">
              <path d="M1 1h14v4H1zM1 9h5v4H1zM10 9h5v4h-5z" fill="#2c6ca8" />
              <path d="M3.5 5v4M12.5 5v4" stroke="#2c6ca8" />
            </svg>
            <svg width="16" height="14" viewBox="0 0 16 14">
              <rect x="0" y="1" width="9" height="9" fill="#c5d3e2" />
              <rect x="4.5" y="4.5" width="11" height="9" fill="#eef2f6" stroke="#c5d3e2" />
              <path d="M7 8h6M7 10.5h6" stroke="#c5d3e2" />
            </svg>
            <svg width="16" height="14" viewBox="0 0 16 14">
              <path d="M1 3h6v4H1zM9 8h6v4H9z" fill="#c5d3e2" />
              <path d="M7 4l4 1M5 8l4 2" stroke="#c5d3e2" strokeWidth="1.5" />
            </svg>
          </PaneTools>
          <Tree>
            {treeRows.map((row) => (
              <TreeRow key={row.label} $depth={row.depth} $selected={row.selected}>
                <Twist $state={row.twist} />
                <TreeIcon>{row.folder ? <FolderIcon color={row.folder} /> : treeIcons[row.icon]}</TreeIcon>
                {row.label}
              </TreeRow>
            ))}
          </Tree>
          <SearchBox>
            <SearchIcon>
              <svg width="18" height="14" viewBox="0 0 18 14">
                <rect x="1.5" y="1.5" width="14" height="9" fill="#fff" stroke="#333" />
                <text x="8.5" y="9" textAnchor="middle" fontSize="7" fontFamily="Noto Sans" fill="#333">
                  abc
                </text>
                <path d="M12 11h5l-2.5 3z" fill="#333" />
              </svg>
            </SearchIcon>
            <SearchHint>Keyword</SearchHint>
          </SearchBox>
          <PaneDivider />
          <PaneTools $h={29} $gap={9}>
            <svg width="17" height="16" viewBox="0 0 17 16">
              <path d="M8.5 0l2.4 5.5 5.9.5-4.5 3.9 1.4 5.8-5.2-3.1-5.2 3.1 1.4-5.8L.2 6l5.9-.5z" fill="#2f74b5" />
            </svg>
            <svg width="15" height="13" viewBox="0 0 15 13">
              <path d="M0 3h15v3.5H0zM0 7.5h15V13H0z" fill="#d3deea" />
              <path d="M4.5 3V1h6v2" fill="none" stroke="#d3deea" strokeWidth="1.5" />
            </svg>
          </PaneTools>
          <EmptyNote>
            No bookmarks have been registered.
            <br />
            You can add one from the editor tab's
            <br />
            context menu.
          </EmptyNote>
        </Sidebar>

        <Main>
          <TabStrip>
            <EditorTab>
              {treeIcons.unit}
              Target speed calculation
            </EditorTab>
            <TabMenu>
              <TinyChevron color="#777" />
            </TabMenu>
          </TabStrip>
          <NavRow>
            <ModeBadge>M</ModeBadge>
            <NavArrows>
              <svg width="16" height="12" viewBox="0 0 16 12">
                <path d="M16 6H1.5M6.5 1l-5 5 5 5" fill="none" stroke="#111" strokeWidth="1.5" />
              </svg>
              <svg width="16" height="12" viewBox="0 0 16 12">
                <path d="M0 6h14.5M9.5 1l5 5-5 5" fill="none" stroke="#d8d8d8" strokeWidth="1.5" />
              </svg>
            </NavArrows>
            <Breadcrumb>
              <span>«</span>
              <span>APP Layer</span>
              <Caret />
              <span>Vehicle Speed Deviation Calculation</span>
              <Caret />
              <span>Target speed calculation</span>
              <Caret />
            </Breadcrumb>
            <NavMore>»</NavMore>
            <NavLink $ml={16}>Specifications List</NavLink>
            <NavLink $ml={20}>Interface List</NavLink>
            <DetailButton>Detail</DetailButton>
          </NavRow>

          <Heading $indent={30} $pad={16} $top={7} $bottom={8} $size={14.5}>
            <Kind>SoftwareUnit</Kind> Target speed calculation
          </Heading>
          <Heading $indent={30} $pad={16} $top={15} $bottom={4} $size={12.3}>
            <Kind>DynamicDesign</Kind>
          </Heading>
          <Heading $indent={42} $pad={16} $top={14} $bottom={4} $size={11.35}>
            <Kind>1. DynamicDesign</Kind> Dynamic Design
          </Heading>
          <Heading $indent={62} $pad={16} $top={14} $bottom={3} $size={11.35}>
            <Kind>DFD</Kind>
          </Heading>
          <ModelTable>
            <TableBody>
              <TableHead />
              <TableCell />
            </TableBody>
            <ResizeMark />
          </ModelTable>
          <SideHandle />
        </Main>
      </Body>

      <StatusBar>
        <StatusItem $active $ml={0}>
          <svg width="16" height="14" viewBox="0 0 16 14">
            <rect x="0.5" y="0.5" width="15" height="13" fill="#fff" stroke="#555" />
            <rect x="1" y="1" width="14" height="3" fill="#666" />
            <rect x="1" y="4" width="5" height="9" fill="#bcdcf5" />
          </svg>
        </StatusItem>
        <StatusItem $ml={9}>
          <svg width="16" height="14" viewBox="0 0 16 14">
            <rect x="0.5" y="0.5" width="15" height="13" fill="#fff" stroke="#555" />
            <rect x="1" y="1" width="14" height="5" fill="#666" />
            <rect x="1" y="7" width="14" height="3" fill="#bcdcf5" />
          </svg>
        </StatusItem>
        <StatusItem $ml={13}>
          <svg width="16" height="14" viewBox="0 0 16 14">
            <rect x="0.5" y="0.5" width="15" height="13" fill="#fff" stroke="#555" />
            <rect x="1" y="1" width="14" height="2" fill="#666" />
            <rect x="9" y="3" width="6" height="10" fill="#bcdcf5" />
            <path d="M8 1v12" stroke="#555" />
          </svg>
        </StatusItem>
        <StatusItem $ml={13}>
          <svg width="16" height="16" viewBox="0 0 16 16">
            <path d="M1 5l7-4 7 4-7 4z" fill="#fff" stroke="#777" strokeDasharray="2 1" />
            <path d="M1 8l7 4 7-4M3 11l5 4" fill="none" stroke="#777" strokeWidth="1.5" />
            <path d="M15 7l-5 7" stroke="#666" strokeWidth="2" />
          </svg>
        </StatusItem>
        <StatusItem $ml={12}>
          <svg width="16" height="15" viewBox="0 0 16 15">
            <rect x="0.5" y="0.5" width="15" height="12" fill="#fff" stroke="#555" />
            <rect x="1" y="1" width="14" height="2" fill="#777" />
            <circle cx="12" cy="11" r="3" fill="none" stroke="#333" strokeWidth="2" />
          </svg>
        </StatusItem>
        <StatusItem $ml={14} $size={13.2}>
          100%
        </StatusItem>
        <StatusItem $ml={18}>
          <svg width="9" height="9" viewBox="0 0 9 9">
            <path d="M0 4.5h9" stroke="#777" />
          </svg>
        </StatusItem>
        <ZoomSlider />
        <StatusItem $ml={11}>
          <svg width="11" height="11" viewBox="0 0 11 11">
            <path d="M0 5.5h11M5.5 0v11" stroke="#777" />
          </svg>
        </StatusItem>
        <StatusItem $ml={21}>
          <svg width="15" height="15" viewBox="0 0 15 15">
            <path d="M7.5 0l2.5 3H5zM7.5 15l2.5-3H5zM0 7.5L3 5v5zM15 7.5L12 5v5z" fill="#555" />
            <path d="M7.5 3v9M3 7.5h9" stroke="#999" />
          </svg>
        </StatusItem>
        <StatusItem $ml={25}>
          <svg width="14" height="15" viewBox="0 0 14 15">
            <path d="M7 0a4.5 4.5 0 0 1 4.5 4.5V9L14 12H0l2.5-3V4.5A4.5 4.5 0 0 1 7 0zM5 13h4a2 2 0 0 1-4 0z" fill="#222" />
          </svg>
        </StatusItem>
        <StatusItem $ml={14}>
          <svg width="10" height="10" viewBox="0 0 10 10">
            <path d="M8 1h1v1H8zM5 4.5h1v1H5zM8 4.5h1v1H8zM1.5 8h1v1h-1zM5 8h1v1H5zM8 8h1v1H8z" fill="#999" />
          </svg>
        </StatusItem>
      </StatusBar>

      <PopupMenu entries={mainMenu} x={246} y={359} w={298} gap={1} gapEnd={1} />
      <PopupMenu entries={subMenu} x={536} y={366} w={306} gap={2} gapEnd={2} />
      <PointerMark width="15" height="21" viewBox="0 0 15 21">
        <path d="M1 1v15l3.5-3.5L7 18.5l3-1.3-2.5-5.5H12.5z" fill="#fff" stroke="#111" />
      </PointerMark>
    </Window>
  );
}
